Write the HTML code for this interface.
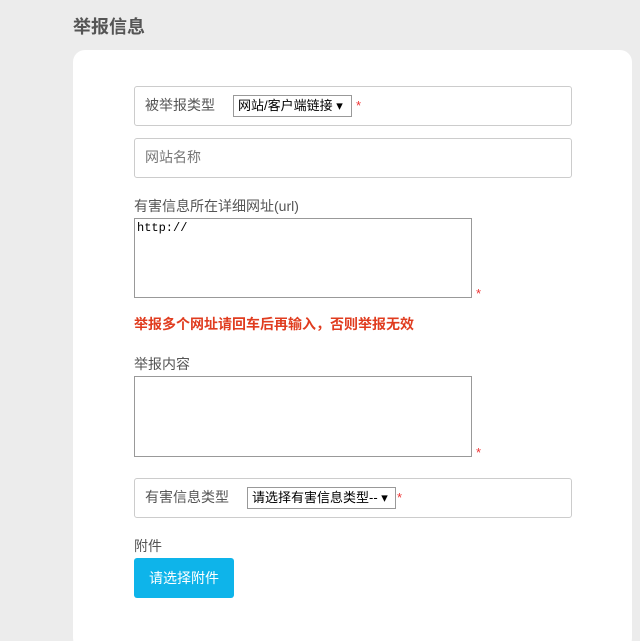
<!DOCTYPE html>
<html><head><meta charset="utf-8"><style>
html,body{margin:0;width:640px;height:641px;overflow:hidden}
body{background:#ececec;position:relative;font-family:"Liberation Sans","Noto Sans CJK SC",sans-serif;color:#555;font-size:14px}
.a{position:absolute}
.card{left:73px;top:50px;width:559px;height:600px;background:#fff;border-radius:12px}
.box{border:1px solid #ccc;border-radius:3px;background:#fff;box-sizing:border-box}
.sel{border:1px solid #999;background:#fff;color:#000;font-size:13px;height:22px;box-sizing:border-box;line-height:20px;padding-left:4px;white-space:nowrap}
.star{color:#e33;font-size:13px}
.ta{border:1px solid #999;background:#fff;box-sizing:border-box}
</style></head><body>
<div class="a" style="left:73px;top:13px;font-size:18px;font-weight:bold;color:#555">举报信息</div>
<div class="a card"></div>
<div class="a box" style="left:134px;top:86px;width:438px;height:40px"></div>
<div class="a" style="left:145px;top:95px">被举报类型</div>
<div class="a sel" style="left:233px;top:95px;width:119px">网站/客户端链接 ▾</div>
<div class="a star" style="left:356px;top:98px">*</div>
<div class="a box" style="left:134px;top:138px;width:438px;height:40px"></div>
<div class="a" style="left:145px;top:147px;color:#777">网站名称</div>
<div class="a" style="left:134px;top:196px">有害信息所在详细网址(url)</div>
<div class="a ta" style="left:134px;top:218px;width:338px;height:80px"></div>
<div class="a" style="left:137px;top:221px;font-family:'Liberation Mono',monospace;font-size:12px;color:#000">http://</div>
<div class="a star" style="left:476px;top:286px">*</div>
<div class="a" style="left:134px;top:314px;color:#e03c1f;font-weight:bold">举报多个网址请回车后再输入，否则举报无效</div>
<div class="a" style="left:134px;top:354px">举报内容</div>
<div class="a ta" style="left:134px;top:376px;width:338px;height:81px"></div>
<div class="a star" style="left:476px;top:445px">*</div>
<div class="a box" style="left:134px;top:478px;width:438px;height:40px"></div>
<div class="a" style="left:145px;top:487px">有害信息类型</div>
<div class="a sel" style="left:247px;top:487px;width:149px">请选择有害信息类型-- ▾</div>
<div class="a star" style="left:397px;top:490px">*</div>
<div class="a" style="left:134px;top:536px">附件</div>
<div class="a" style="left:134px;top:558px;width:100px;height:40px;background:#0eb4ea;border-radius:3px;color:#fff;text-align:center;line-height:40px">请选择附件</div>
</body></html>
